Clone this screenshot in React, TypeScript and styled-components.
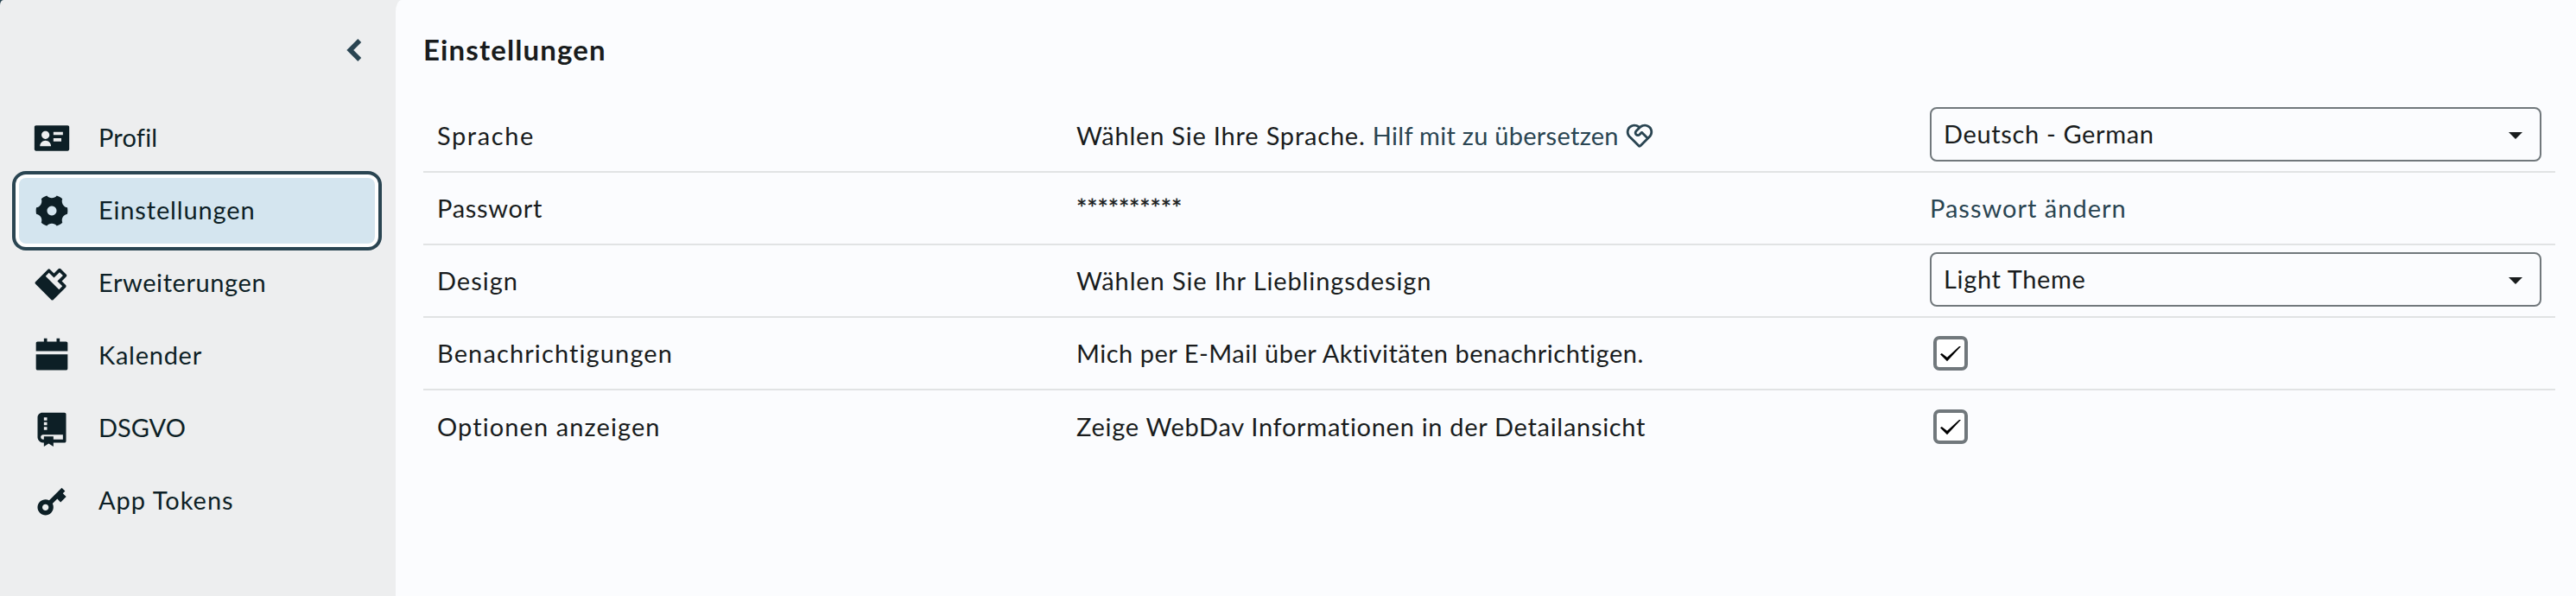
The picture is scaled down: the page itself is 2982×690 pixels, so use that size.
import React from "react";
import styled, { createGlobalStyle } from "styled-components";
import {
  RiIdCardFill,
  RiSettings4Fill,
  RiBrush2Fill,
  RiCalendarFill,
  RiGitRepositoryFill,
  RiKey2Fill,
  RiArrowLeftSLine,
  RiServiceLine,
} from "react-icons/ri";

const GlobalStyle = createGlobalStyle`
  * { box-sizing: border-box; }
  body {
    margin: 0;
    background: #2a4552;
    font-family: Lato, "Open Sans", sans-serif;
    font-size: 29px;
    line-height: 34px;
    font-variant-ligatures: none;
    color: #191c1d;
  }
`;

const Shell = styled.div`
  display: flex;
  width: 100%;
  height: 690px;
  background: #edeeef;
  border-top-left-radius: 4px 6px;
  overflow: hidden;
`;

const Sidebar = styled.nav`
  width: 458px;
  flex: none;
  padding: 0 24px 0 22px;
  display: flex;
  flex-direction: column;
  color: #0d1f26;
`;

const SidebarTop = styled.div`
  height: 122px;
  display: flex;
  justify-content: flex-end;
  align-items: flex-start;
  padding: 36px 2px 0 0;
`;

const CollapseButton = styled.button`
  width: 44px;
  height: 44px;
  padding: 0;
  border: 0;
  background: none;
  color: #2a4552;
  display: flex;
  svg { width: 44px; height: 44px; stroke: currentColor; stroke-width: 1; }
`;

const NavList = styled.div`
  display: flex;
  flex-direction: column;
  gap: 8px;
`;

const NavItem = styled.a<{ $active?: boolean }>`
  display: flex;
  align-items: center;
  gap: 32px;
  height: 76px;
  padding: 0 16px;
  border-radius: 8px;
  background: ${(p) => (p.$active ? "#d4e5ef" : "transparent")};
  box-shadow: ${(p) => (p.$active ? "0 0 0 4px #fff, 0 0 0 8px #2a4552" : "none")};
  svg { width: 44px; height: 44px; flex: none; }
`;

const Label = styled.span<{ $track?: number }>`
  white-space: nowrap;
  letter-spacing: ${(p) => p.$track ?? 0}px;
`;

const NavLabel = styled(Label)`
  padding-bottom: 3px;
`;

const MaskedPassword = styled(Label)`
  -webkit-text-stroke: 0.4px currentColor;
`;

const Main = styled.main`
  flex: 1;
  background: #fbfcfe;
  border-top-left-radius: 7px 14px;
  padding: 0 24px 0 32px;
`;

const Title = styled.h1`
  margin: 0;
  height: 116px;
  padding-top: 37px;
  font-size: 33px;
  line-height: 40px;
  font-weight: 700;
`;

const Row = styled.div`
  display: grid;
  grid-template-columns: 740px 988px 1fr;
  align-items: center;
  height: 84px;
  border-bottom: 2px solid #e1e3e4;
  &:last-child { height: 86px; border-bottom-color: transparent; }
`;

const Cell = styled.div`
  display: flex;
  align-items: center;
  padding: 0 16px;
`;

const Link = styled.a`
  display: inline-flex;
  align-items: center;
  gap: 7px;
  color: #2a4552;
  svg { width: 34px; height: 34px; }
`;

const Select = styled.div`
  display: flex;
  align-items: center;
  justify-content: space-between;
  width: 708px;
  height: 63px;
  margin-bottom: 3px;
  padding: 0 20px 0 14px;
  border: 2px solid #71787c;
  border-radius: 8px;
`;

const SelectValue = styled(Label)`
  padding-bottom: 2px;
`;

const Caret = styled.svg`
  width: 16px;
  height: 8px;
  margin-top: 3px;
`;

const Checkbox = styled.span`
  display: flex;
  width: 40px;
  height: 40px;
  margin-left: 4px;
  border: 4px solid #71787c;
  border-radius: 7px;
  background: #fff;
`;

function Dropdown({ value, track }: { value: string; track?: number }) {
  return (
    <Select>
      <SelectValue $track={track}>{value}</SelectValue>
      <Caret viewBox="0 0 16 8"><path d="M0 0h16L8 8z" fill="#191c1d" /></Caret>
    </Select>
  );
}

function Checked() {
  return (
    <Checkbox>
      <svg width="32" height="32" viewBox="0 0 32 32">
        <path d="M4 17.3L5.8 16l6.2 4.8L26 8h2L12 25.2z" fill="#000" />
      </svg>
    </Checkbox>
  );
}

const navItems = [
  { label: "Profil", icon: <RiIdCardFill />, track: 0.2 },
  { label: "Einstellungen", icon: <RiSettings4Fill />, track: 0.85, active: true },
  { label: "Erweiterungen", icon: <RiBrush2Fill />, track: 0.58 },
  { label: "Kalender", icon: <RiCalendarFill />, track: 0.75 },
  { label: "DSGVO", icon: <RiGitRepositoryFill />, track: 0 },
  { label: "App Tokens", icon: <RiKey2Fill />, track: 1 },
];

export default function App() {
  return (
    <>
      <GlobalStyle />
      <Shell>
        <Sidebar>
          <SidebarTop>
            <CollapseButton><RiArrowLeftSLine /></CollapseButton>
          </SidebarTop>
          <NavList>
            {navItems.map((n) => (
              <NavItem key={n.label} $active={n.active}>
                {n.icon}
                <NavLabel $track={n.track}>{n.label}</NavLabel>
              </NavItem>
            ))}
          </NavList>
        </Sidebar>
        <Main>
          <Title><Label $track={1.12}>Einstellungen</Label></Title>
          <Row>
            <Cell><Label $track={1.6}>Sprache</Label></Cell>
            <Cell>
              <Label $track={0.8}>Wählen Sie Ihre Sprache.&nbsp;</Label>
              <Link><Label $track={0.28}>Hilf mit zu übersetzen</Label><RiServiceLine /></Link>
            </Cell>
            <Cell><Dropdown value="Deutsch - German" track={0.65} /></Cell>
          </Row>
          <Row>
            <Cell><Label $track={0.7}>Passwort</Label></Cell>
            <Cell><MaskedPassword $track={-0.1}>**********</MaskedPassword></Cell>
            <Cell><Link><Label $track={1}>Passwort ändern</Label></Link></Cell>
          </Row>
          <Row>
            <Cell><Label $track={1}>Design</Label></Cell>
            <Cell><Label $track={0.88}>Wählen Sie Ihr Lieblingsdesign</Label></Cell>
            <Cell><Dropdown value="Light Theme" track={0.65} /></Cell>
          </Row>
          <Row>
            <Cell><Label $track={1.12}>Benachrichtigungen</Label></Cell>
            <Cell><Label $track={0.52}>Mich per E-Mail über Aktivitäten benachrichtigen.</Label></Cell>
            <Cell><Checked /></Cell>
          </Row>
          <Row>
            <Cell><Label $track={1.1}>Optionen anzeigen</Label></Cell>
            <Cell><Label $track={0.7}>Zeige WebDav Informationen in der Detailansicht</Label></Cell>
            <Cell><Checked /></Cell>
          </Row>
        </Main>
      </Shell>
    </>
  );
}
